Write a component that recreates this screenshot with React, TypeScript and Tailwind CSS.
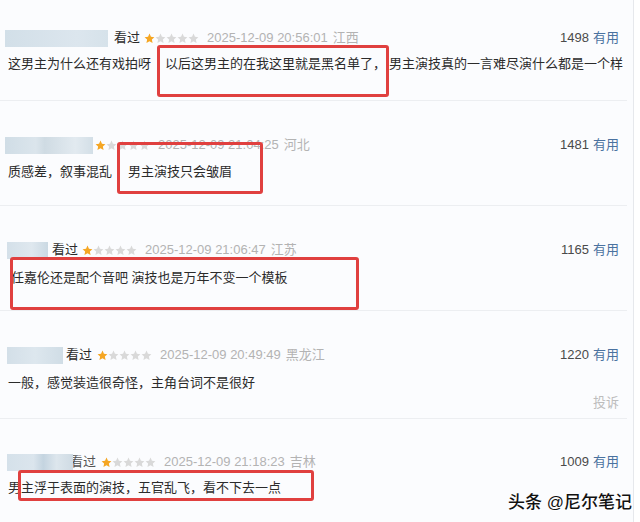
const Star = ({ on }: { on: boolean }) => (
  <svg width="11" height="11" viewBox="0 0 24 24" className="shrink-0">
    <path
      d="M12 1.2l3.2 6.9 7.5.9-5.5 5.2 1.5 7.4L12 18l-6.7 3.6 1.5-7.4-5.5-5.2 7.5-.9z"
      fill={on ? "#f5a623" : "#d9d9d9"}
    />
  </svg>
);

const Stars = () => (
  <div className="flex items-center">
    <Star on />
    <Star on={false} />
    <Star on={false} />
    <Star on={false} />
    <Star on={false} />
  </div>
);

const Header = ({
  blur,
  seen,
  date,
  place,
  count,
}: {
  blur: string;
  seen: React.ReactNode;
  date: string;
  place: string;
  count: string;
}) => (
  <div className="flex h-5 items-center pl-[5px] pr-2 text-[13px] leading-5">
    <div className={`h-[17px] blur-[0.6px] ${blur}`} />
    {seen}
    <Stars />
    <span className="ml-2 text-[#b3b3b3]">{date}</span>
    <span className="ml-[5px] text-[#b3b3b3]">{place}</span>
    <span className="ml-auto text-[#4a4a4a]">{count}</span>
    <span className="ml-[4px] text-[#4a72a0]">有用</span>
  </div>
);

const RedBox = ({ className }: { className: string }) => (
  <div className={`absolute rounded-[3px] border-[3px] border-[#e0403f] ${className}`} />
);

export default function App() {
  return (
    <div
      className="relative h-[522px] w-[640px] overflow-hidden bg-white text-[#2b2b2b]"
      style={{ fontFamily: '"Liberation Sans", "Noto Sans CJK SC", sans-serif' }}
    >
      <div className="h-full w-[634px] border-r border-[#e6e8ec] bg-[#fbfcfe]">
        {/* review 1 */}
        <div className="relative mr-[6px] h-[101px] border-b border-[#eceef1] pt-[28px]">
          <Header
            blur="w-[103px] bg-[linear-gradient(90deg,#d2dfe8,#dce6ee_70%,#d6e2ea)]"
            seen={<span className="ml-[6px] mr-[4px]">看过</span>}
            date="2025-12-09 20:56:01"
            place="江西"
            count="1498"
          />
          <p className="mt-[6px] whitespace-nowrap pl-2 text-[13px] leading-5">
            这男主为什么还有戏拍呀
            <span className="ml-[14px]">以后这男主的在我这里就是黑名单了，</span>
            <span className="ml-[3px]">男主演技真的一言难尽演什么都是一个样</span>
          </p>
          <RedBox className="left-[157px] top-[45px] h-[52px] w-[232px]" />
        </div>

        {/* review 2 */}
        <div className="relative mr-[6px] h-[105px] border-b border-[#eceef1] pt-[34px]">
          <Header
            blur="mr-[2px] w-[88px] bg-[linear-gradient(90deg,#d0dde6,#dbe5ec_35%,#cfdbe3_45%,#e2eaf0_80%,#d3dfe7)]"
            seen={null}
            date="2025-12-09 21:04:25"
            place="河北"
            count="1481"
          />
          <p className="mt-[7px] whitespace-nowrap pl-2 text-[13px] leading-5">
            质感差，叙事混乱
            <span className="ml-4">男主演技只会皱眉</span>
          </p>
          <RedBox className="left-[117px] top-[41px] h-[52px] w-[146px]" />
        </div>

        {/* review 3 */}
        <div className="relative mr-[6px] h-[105px] border-b border-[#eceef1] pt-[34px]">
          <Header
            blur="ml-[2px] w-[41px] bg-[linear-gradient(90deg,#d4e0e9,#dfe8ef_60%,#cbd9e3)]"
            seen={<span className="ml-[4px] mr-[4px]">看过</span>}
            date="2025-12-09 21:06:47"
            place="江苏"
            count="1165"
          />
          <p className="mt-[8px] whitespace-nowrap pl-[11px] text-[13px] leading-5">
            任嘉伦还是配个音吧 演技也是万年不变一个模板
          </p>
          <RedBox className="left-[10px] top-[51px] h-[53px] w-[349px]" />
        </div>

        {/* review 4 */}
        <div className="relative mr-[6px] h-[108px] border-b border-[#eceef1] pt-[34px]">
          <Header
            blur="ml-[2px] w-[56px] bg-[linear-gradient(90deg,#d3dfe8,#dde7ee_50%,#d0dde6)]"
            seen={<span className="ml-[3px] mr-[5px]">看过</span>}
            date="2025-12-09 20:49:49"
            place="黑龙江"
            count="1220"
          />
          <p className="mt-[8px] whitespace-nowrap pl-2 text-[13px] leading-5">
            一般，感觉装造很奇怪，主角台词不是很好
          </p>
          <div className="flex justify-end pr-2 text-[13px] leading-5 text-[#bdbdbd]">投诉</div>
        </div>

        {/* review 5 */}
        <div className="relative mr-[6px] pt-[33px]">
          <Header
            blur="ml-[2px] w-[66px] bg-[linear-gradient(90deg,#d5e1ea,#dbe5ed_40%,#c4d4e0_55%,#dde6ed_75%,#cfdbe4)]"
            seen={<span className="ml-[-3px] mr-[5px] text-[#555]">看过</span>}
            date="2025-12-09 21:18:23"
            place="吉林"
            count="1009"
          />
          <p className="mt-[6px] whitespace-nowrap pl-2 text-[13px] leading-5">
            男主浮于表面的演技，五官乱飞，看不下去一点
          </p>
          <RedBox className="left-[18px] top-[51px] h-[31px] w-[296px]" />
        </div>
      </div>

      <div className="absolute left-[508px] top-[491px] text-[17px] font-medium leading-6 text-[#111] [text-shadow:0_0_2px_#fff,0_0_2px_#fff,1px_1px_1px_#fff]">
        头条 @尼尔笔记
      </div>
    </div>
  );
}
